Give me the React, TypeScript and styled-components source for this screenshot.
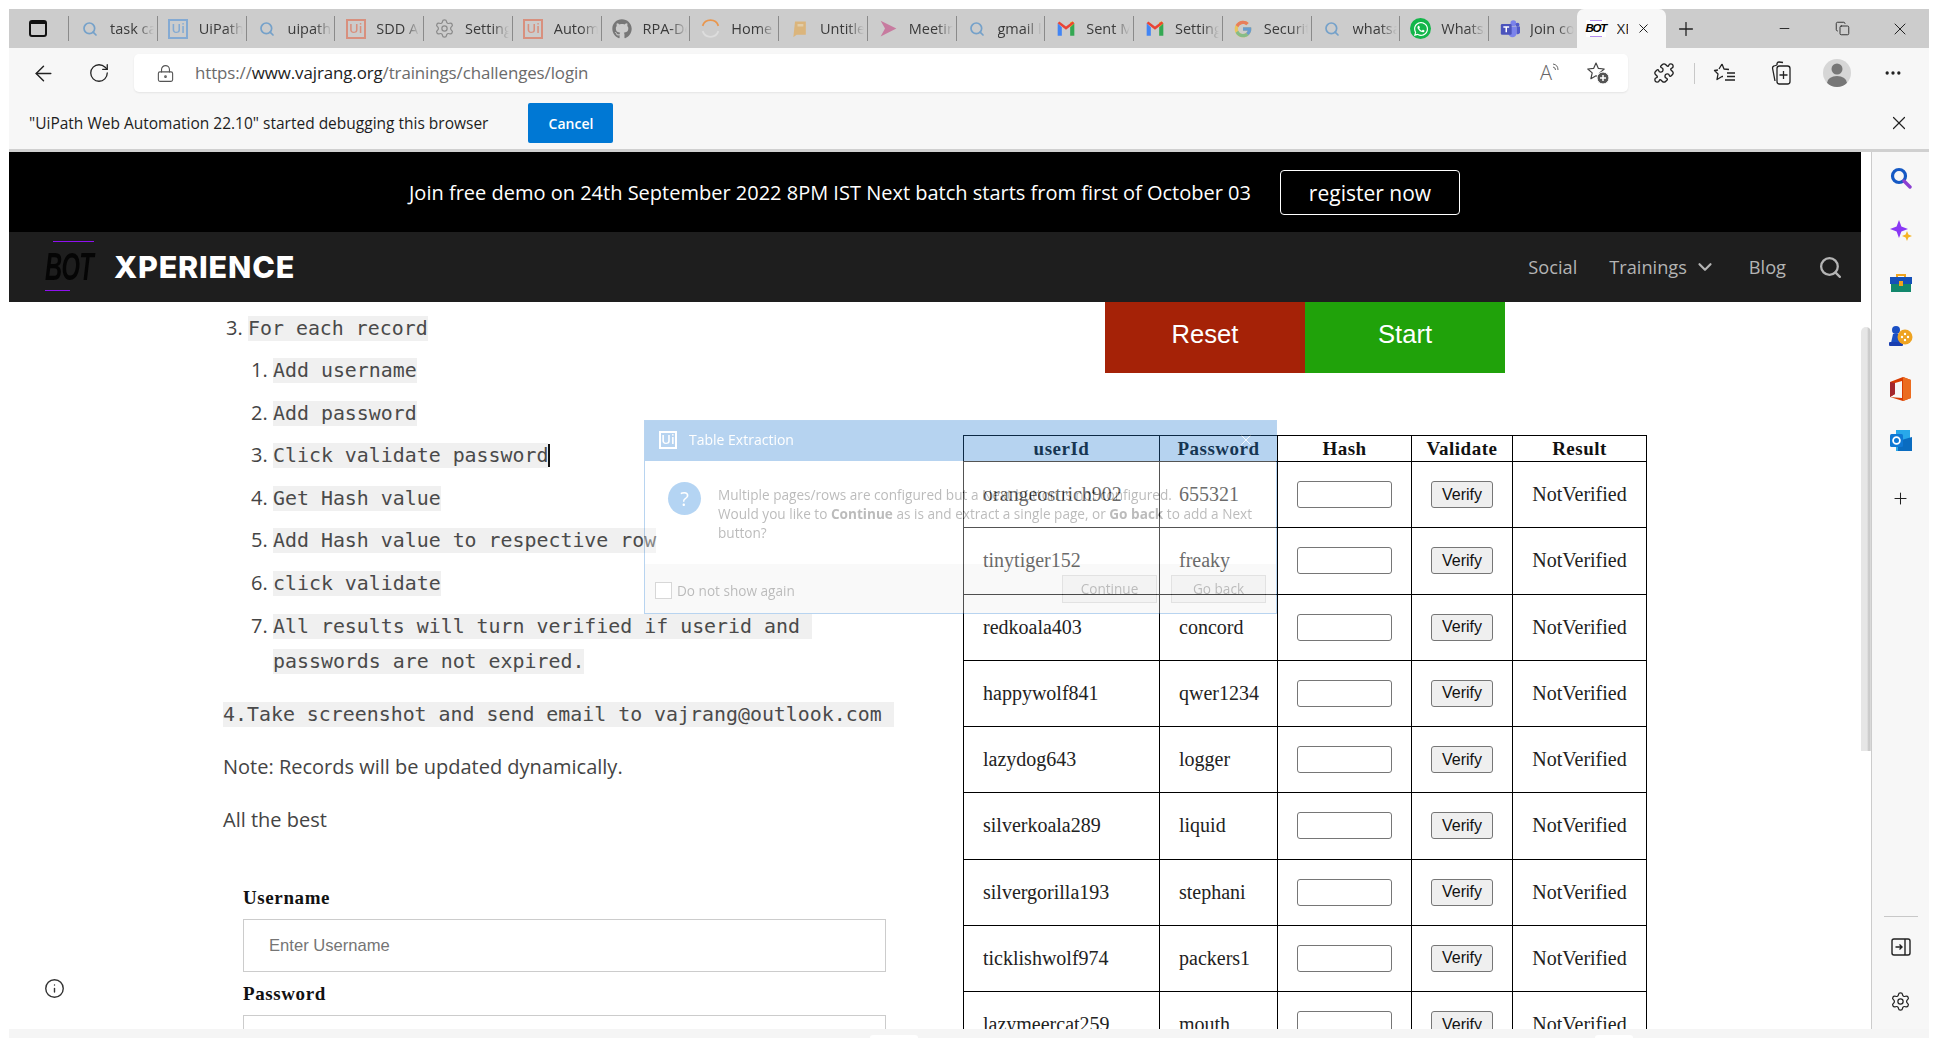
import * as React from "react";
import styled, {createGlobalStyle} from "styled-components";
import {
    ArrowLeft, ChevronDown, Copy, Info, LockKeyhole, Minus, MoreHorizontal,
    Plus, Puzzle, RotateCw, Search, Settings, X
} from "lucide-react";
import {FaGithub, FaWhatsapp} from "react-icons/fa";
import {FcGoogle} from "react-icons/fc";

const GlobalStyle = createGlobalStyle`
    html, body {
        margin: 0;
        padding: 0;
        background: white;
        overflow: hidden;
    }
`;

const Frame = styled.div`
    display: flex;
    flex-direction: column;
    box-sizing: border-box;
    width: 1938px;
    height: 1038px;
    padding: 9px 9px 0;
    overflow: hidden;
    font-family: "Open Sans", sans-serif;
`;

/* browser chrome */

const TabStrip = styled.div`
    display: flex;
    align-items: center;
    flex: none;
    height: 39px;
    background: #cccccc;
`;

const TabsButton = styled.div`
    display: flex;
    justify-content: center;
    flex: none;
    width: 59px;
    padding-right: 1px;
    box-sizing: border-box;
`;

const TabsGlyph = styled.div`
    box-sizing: border-box;
    width: 18px;
    height: 17px;
    border: 2px solid #111;
    border-top-width: 4px;
    border-radius: 3px;
`;

const TabSeparator = styled.div`
    flex: none;
    width: 1px;
    height: 25px;
    background: #8a8a8a;
`;

const Tab = styled.div`
    display: flex;
    align-items: center;
    flex: none;
    box-sizing: border-box;
    width: 87.75px;
    height: 100%;
    padding-left: 10px;
`;

const ActiveTab = styled(Tab)`
    width: 89px;
    margin-left: 0;
    padding-left: 9px;
    background: #f7f7f7;
    border-radius: 7px 7px 0 0;
`;

const TabIcon = styled.div<{$faded?: boolean}>`
    display: flex;
    align-items: center;
    justify-content: center;
    flex: none;
    width: 21px;
    height: 21px;
    opacity: ${({$faded}) => ($faded ? 0.55 : 1)};
`;

const TabTitle = styled.div`
    flex: none;
    width: 44px;
    margin-left: 10px;
    overflow: hidden;
    white-space: nowrap;
    font-size: 14.5px;
    color: #3a3a3a;
    -webkit-mask-image: linear-gradient(to right, black 62%, transparent 100%);
    mask-image: linear-gradient(to right, black 62%, transparent 100%);
`;

const ActiveTitle = styled.div`
    flex: none;
    width: 11px;
    margin-left: 11px;
    overflow: hidden;
    font-size: 14.5px;
    color: #222;
`;

const TabClose = styled.div`
    display: flex;
    margin-left: 8px;
`;

const NewTab = styled.div`
    display: flex;
    justify-content: center;
    flex: none;
    width: 40px;
`;

const WindowControls = styled.div`
    display: flex;
    align-items: center;
    margin-left: auto;
`;

const WindowButton = styled.div`
    display: flex;
    justify-content: center;
    width: 58px;
`;

const UiBadge = styled.div<{$color: string; $size?: number}>`
    display: flex;
    align-items: center;
    justify-content: center;
    box-sizing: border-box;
    width: ${({$size}) => $size || 20}px;
    height: ${({$size}) => $size || 20}px;
    border: 2px solid ${({$color}) => $color};
    color: ${({$color}) => $color};
    font-size: 13px;
    font-weight: 600;
    line-height: 1;
`;

const FaviconLogo = styled.div`
    display: flex;
    flex-direction: column;
    align-items: center;
    flex: none;
    width: 20px;
    font: italic 700 11.5px/15px "Liberation Sans", sans-serif;
    letter-spacing: -1.2px;
    color: #000;
    background: white;
    &::before, &::after {
        content: "";
        flex: none;
        width: 12px;
        height: 1px;
        background: #b48cf0;
    }
`;

const WhatsappDisc = styled.div`
    display: flex;
    align-items: center;
    justify-content: center;
    width: 21px;
    height: 21px;
    border-radius: 50%;
    background: #13b64a;
`;

const Toolbar = styled.div`
    display: flex;
    align-items: center;
    flex: none;
    box-sizing: border-box;
    gap: 12px;
    height: 52px;
    padding: 0 0 2px 12px;
    background: #f7f7f7;
`;

const ToolButton = styled.div`
    display: flex;
    align-items: center;
    justify-content: center;
    flex: none;
    width: 44px;
    height: 38px;
`;

const AddressBar = styled.div`
    display: flex;
    align-items: center;
    flex: none;
    box-sizing: border-box;
    width: 1494px;
    height: 38px;
    margin-left: 1px;
    margin-right: 2px;
    padding: 0 18px 0 22px;
    background: white;
    border-radius: 5px;
    box-shadow: 0 1px 2px rgba(0, 0, 0, 0.08);
`;

const Url = styled.div`
    margin-left: 20px;
    padding-bottom: 2px;
    font-size: 16.9px;
    color: #6b6b6b;
    letter-spacing: -0.1px;
    b {
        font-weight: 400;
        color: #222;
    }
`;

const AddressTools = styled.div`
    display: flex;
    align-items: center;
    gap: 25px;
    margin-left: auto;
`;

const ReadAloud = styled.div`
    display: flex;
    align-items: flex-start;
    font: 300 20px/22px "Open Sans", sans-serif;
    color: #666;
`;

const ToolDivider = styled.div`
    flex: none;
    width: 1px;
    height: 21px;
    margin: 0 -4px;
    background: #c8c8c8;
`;

const Avatar = styled.div`
    display: flex;
    align-items: center;
    justify-content: center;
    width: 28px;
    height: 28px;
    overflow: hidden;
    background: #d6d6d6;
    border-radius: 50%;
`;

const InfoBar = styled.div`
    display: flex;
    align-items: center;
    flex: none;
    box-sizing: border-box;
    height: 52px;
    padding: 0 19px 3px 20px;
    background: #f7f7f7;
    border-bottom: 3px solid #d0d0d0;
    font-size: 15.5px;
    color: #1d1d1d;
`;

const CancelButton = styled.div`
    display: flex;
    align-items: center;
    justify-content: center;
    width: 85px;
    height: 40px;
    margin-left: 40px;
    background: #0078d4;
    border-radius: 2px;
    color: white;
    font-size: 14px;
    font-weight: 600;
`;

const InfoClose = styled.div`
    display: flex;
    margin-left: auto;
`;

const BodyRow = styled.div`
    display: flex;
    flex: 1;
    min-height: 0;
`;

/* page */

const WebArea = styled.div`
    display: flex;
    flex-direction: column;
    flex: none;
    width: 1852px;
    overflow: hidden;
`;

const Announcement = styled.div`
    display: flex;
    align-items: center;
    flex: none;
    gap: 29px;
    height: 80px;
    padding-left: 400px;
    padding-top: 1px;
    box-sizing: border-box;
    background: #000;
    color: white;
    font-size: 20px;
    white-space: nowrap;
`;

const RegisterButton = styled.div`
    display: flex;
    align-items: center;
    justify-content: center;
    box-sizing: border-box;
    width: 180px;
    height: 45px;
    border: 1px solid white;
    border-radius: 4px;
    font-size: 21px;
`;

const NavBar = styled.div`
    display: flex;
    align-items: center;
    flex: none;
    height: 70px;
    padding: 0 18px 0 36px;
    box-sizing: border-box;
    background: #1e1e1e;
`;

const Logo = styled.div`
    display: flex;
    flex-direction: column;
    width: 50px;
    height: 52px;
    font: italic 700 33px/34px "Liberation Sans", sans-serif;
    color: #050505;
`;

const LogoLine = styled.div<{$width: number; $top?: boolean}>`
    width: ${({$width}) => $width}px;
    height: 1px;
    margin-left: ${({$top}) => ($top ? "8px" : "0")};
    background: #8f10f0;
`;

const LogoText = styled.div`
    height: 48px;
    padding-top: 4px;
    box-sizing: border-box;
    transform: scale(0.72, 1.2);
    transform-origin: left top;
    letter-spacing: -1px;
`;

const Brand = styled.div`
    margin-left: 19px;
    font: 800 30.5px/1 Inter, sans-serif;
    color: white;
    letter-spacing: 0.8px;
`;

const NavLinks = styled.div`
    display: flex;
    align-items: center;
    margin-left: auto;
    font-size: 18.2px;
    color: #b4b4b4;
`;

const NavLink = styled.div<{$gap: number}>`
    display: flex;
    align-items: center;
    gap: 7px;
    margin-right: ${({$gap}) => $gap}px;
`;

const Content = styled.div`
    position: relative;
    display: grid;
    grid-template-columns: 954px 1fr;
    flex: 1;
    min-height: 0;
    overflow: hidden;
    background: white;
`;

const LeftColumn = styled.div`
    box-sizing: border-box;
    padding: 8px 0 0 214px;
    font-size: 20px;
    line-height: 35px;
    color: #444;
`;

const StepList = styled.ol`
    margin: 0;
    padding: 0 0 0 25px;
`;

const SubList = styled.ol`
    margin: 7px 0 0;
    padding: 0 0 0 25px;
    li {
        margin-bottom: 7.6px;
    }
`;

const Code = styled.code`
    padding: 1px 0;
    background: #f0f0f0;
    font-family: "DejaVu Sans Mono", monospace;
    font-size: 19.9px;
    line-height: 1;
    color: #4a4a4a;
`;

const Caret = styled.span`
    border-right: 2px solid #111;
    margin-right: -2px;
`;

const CodeLine = styled.p`
    margin: 18.5px 0 0;
`;

const Paragraph = styled.p`
    margin: 18px 0 0;
`;

const Form = styled.form`
    width: 643px;
    margin: 50px 0 0 20px;
`;

const Label = styled.label`
    display: block;
    margin-bottom: 10px;
    font: 700 19px/22px "Liberation Serif", serif;
    color: #111;
    letter-spacing: 0.6px;
`;

const TextInput = styled.input`
    display: block;
    box-sizing: border-box;
    width: 100%;
    height: 53px;
    margin-bottom: 11px;
    padding: 0 25px;
    border: 1px solid #ccc;
    outline: none;
    font: 16.6px "Liberation Sans", sans-serif;
    &::placeholder {
        color: #757575;
    }
`;

const InfoFloat = styled.div`
    position: absolute;
    left: 35px;
    top: 676px;
    display: flex;
    color: #333;
`;

const RightColumn = styled.div`
    display: flex;
    flex-direction: column;
    min-width: 0;
`;

const ActionRow = styled.div`
    display: flex;
    flex: none;
    margin-left: 142px;
`;

const ActionButton = styled.div<{$color: string}>`
    display: flex;
    align-items: center;
    justify-content: center;
    box-sizing: border-box;
    width: 200px;
    height: 71px;
    padding-bottom: 7px;
    background: ${({$color}) => $color};
    color: white;
    font: 25.6px "Liberation Sans", sans-serif;
`;

const Table = styled.table`
    flex: none;
    width: 683px;
    margin-top: 62px;
    border-collapse: collapse;
    table-layout: fixed;
    font-family: "Liberation Serif", serif;
    color: #222;
`;

const HeadCell = styled.th<{$width: number}>`
    box-sizing: border-box;
    width: ${({$width}) => $width}px;
    height: 26px;
    padding: 1px 0 0;
    border: 1px solid #000;
    font-size: 19px;
    font-weight: 700;
    line-height: 24px;
    letter-spacing: 0.5px;
    color: #111;
`;

const Cell = styled.td<{$center?: boolean}>`
    height: 65.25px;
    padding: 0 0 0 ${({$center}) => ($center ? 0 : 19)}px;
    border: 1px solid #000;
    font-size: 20px;
    text-align: ${({$center}) => ($center ? "center" : "left")};
`;

const HashInput = styled.input`
    display: block;
    box-sizing: border-box;
    width: 95px;
    height: 27px;
    margin: 0 auto;
    border: 1px solid #767676;
    border-radius: 3px;
    background: white;
`;

const VerifyButton = styled.button`
    box-sizing: border-box;
    width: 62px;
    height: 27px;
    padding: 0;
    border: 1px solid #767676;
    border-radius: 3px;
    background: #efefef;
    font: 16px "Liberation Sans", sans-serif;
    color: #111;
`;

/* translucent dialog above the page */

const Dialog = styled.div`
    position: absolute;
    left: 635px;
    top: 118px;
    display: flex;
    flex-direction: column;
    box-sizing: border-box;
    width: 633px;
    height: 194px;
    border: 1px solid #2b80d4;
    background: white;
    opacity: 0.33;
    color: #333;
    font-size: 13.6px;
`;

const DialogHeader = styled.div`
    display: flex;
    align-items: center;
    flex: none;
    box-sizing: border-box;
    gap: 12px;
    height: 40px;
    padding: 0 14px 3px;
    background: #257dd2;
    color: white;
    font-size: 14px;
`;

const DialogClose = styled.div`
    display: flex;
    margin-left: auto;
    margin-right: 7px;
`;

const DialogBody = styled.div`
    display: flex;
    flex: 1;
    gap: 17px;
    padding: 24px 0 0 23px;
    line-height: 19px;
    white-space: nowrap;
`;

const HelpCircle = styled.div`
    display: flex;
    align-items: center;
    justify-content: center;
    flex: none;
    width: 33px;
    height: 33px;
    margin-top: -3px;
    border-radius: 50%;
    background: #1f80dc;
    color: white;
    font-size: 20px;
`;

const DialogFooter = styled.div`
    display: flex;
    align-items: center;
    flex: none;
    box-sizing: border-box;
    height: 49px;
    padding: 4px 10px 0;
    background: #efefef;
`;

const Checkbox = styled.div`
    box-sizing: border-box;
    width: 17px;
    height: 17px;
    margin-right: 5px;
    border: 1px solid #888;
    background: white;
`;

const DialogButton = styled.div<{$first?: boolean}>`
    display: flex;
    align-items: center;
    justify-content: center;
    box-sizing: border-box;
    width: 95px;
    height: 28px;
    margin-bottom: 4px;
    margin-left: ${({$first}) => ($first ? "auto" : "14px")};
    border: 1px solid #aaa;
    background: #ddd;
`;

/* scrollbar and sidebar */

const ScrollBar = styled.div`
    flex: none;
    box-sizing: border-box;
    width: 11px;
    border-right: 1px solid #ccc;
    background: white;
`;

const ScrollThumb = styled.div`
    width: 100%;
    height: 424px;
    margin-top: 175px;
    background: linear-gradient(to right, #e6e6e6 60%, #c4c4c4 80%, #e0e0e0);
    border-radius: 5px 5px 0 0;
`;

const SidePanel = styled.div`
    display: flex;
    flex-direction: column;
    flex: none;
    width: 57px;
    background: #f7f7f7;
`;

const SideSlot = styled.div<{$height?: number}>`
    display: flex;
    align-items: center;
    justify-content: center;
    flex: none;
    height: ${({$height}) => $height || 52.6}px;
`;

const SideAddSlot = styled(SideSlot)`
    margin-top: 5px;
`;

const SideFoot = styled.div`
    display: flex;
    flex-direction: column;
    margin-top: auto;
    padding-bottom: 1px;
`;

const SideRule = styled.div`
    width: 34px;
    height: 1px;
    margin: 0 auto 3px 12px;
    background: #c8c8c8;
`;

const BottomBar = styled.div`
    display: flex;
    flex: none;
    height: 9px;
    background: #f5f5f5;
`;

const BottomTab = styled.div<{$left: number; $width: number}>`
    width: ${({$width}) => $width}px;
    height: 3px;
    margin: 6px 0 0 ${({$left}) => $left}px;
    background: white;
    border-radius: 3px 3px 0 0;
`;

const SearchFavicon: React.FC = () => <Search size={16} color="#2f7fc8" strokeWidth={2.6} />;

const GmailIcon: React.FC = () => (
    <svg width="20" height="20" viewBox="0 0 24 24">
        <path fill="#4285F4" d="M2 5v15h5V10z" />
        <path fill="#34A853" d="M17 10v10h5V5z" />
        <path fill="#FBBC04" d="M22 5l-5 5V4l3-1z" />
        <path fill="#EA4335" d="M2 5l10 8 10-8-2-2-8 6-8-6z" />
    </svg>
);

const HomeRing: React.FC = () => (
    <svg width="21" height="21" viewBox="0 0 24 24" fill="none" stroke="#e9964d" strokeWidth="2">
        <path d="M3 9a9.5 9.5 0 0 1 18 0" />
        <path d="M3 15a9.5 9.5 0 0 0 18 0" stroke="#ddd" />
    </svg>
);

const NotebookIcon: React.FC = () => (
    <svg width="20" height="20" viewBox="0 0 24 24">
        <path fill="#e8a33c" d="M6 3h13v16H8l-4 3 2-19z" />
        <path fill="#f5cf8d" d="M9 6h7v3H9z" />
    </svg>
);

const MeetingIcon: React.FC = () => (
    <svg width="21" height="21" viewBox="0 0 24 24">
        <path fill="#c43a7c" d="M3 3l18 9-18 9 5-9z" />
    </svg>
);

const TeamsIcon: React.FC = () => (
    <svg width="20" height="20" viewBox="0 0 24 24">
        <circle cx="16" cy="5" r="3.4" fill="#7b83eb" />
        <circle cx="21" cy="7" r="2.4" fill="#5059c9" />
        <path fill="#7b83eb" d="M10 9h10v8a5 5 0 0 1-10 0z" />
        <path fill="#5059c9" d="M20 9h4v7a3 3 0 0 1-4 2z" />
        <rect x="1" y="6" width="13" height="13" rx="1.5" fill="#4b53bc" />
        <path stroke="white" strokeWidth="1.8" d="M4 9.5h7M7.5 9.5V16" />
    </svg>
);

const STAR = "M10 2l2.4 5.4 5.8.6-4.4 3.9 1.3 5.8L10 14.8l-5.1 2.9 1.3-5.8L1.8 8l5.8-.6z";

const AddFavoriteIcon: React.FC = () => (
    <svg width="24" height="24" viewBox="0 0 24 24" fill="none">
        <path d={STAR} stroke="#444" strokeWidth="1.2" strokeLinejoin="round" />
        <circle cx="17" cy="17" r="6" fill="#555" stroke="white" />
        <path d="M14 17h6M17 14v6" stroke="white" strokeWidth="1.5" />
    </svg>
);

const FavoritesIcon: React.FC = () => (
    <svg width="24" height="22" viewBox="0 0 24 22" fill="none" stroke="#222" strokeWidth="1.3">
        <path d="M9 2l2 5 5 .5M5 8l-3.5.5 3.5 3.5-1 5.5 5-3h1M6 7l3-5" strokeLinejoin="round" />
        <path d="M14 11h8M14 14.5h8M12 18h10" />
    </svg>
);

const CollectionsIcon: React.FC = () => (
    <svg width="24" height="26" viewBox="0 0 24 26" fill="none" stroke="#222" strokeWidth="1.3">
        <path d="M8 5V3.5A2 2 0 0 1 10 2l4 .5M6 21L3.5 8A2 2 0 0 1 5 6l3-1" />
        <rect x="8" y="6" width="13" height="18" rx="2.5" />
        <path d="M14.5 11v8M10.5 15h8" />
    </svg>
);

const DockIcon: React.FC = () => (
    <svg width="22" height="22" viewBox="0 0 22 22" fill="none" stroke="#222" strokeWidth="1.4">
        <rect x="2" y="3" width="18" height="16" rx="2" />
        <path d="M15 3v16" />
        <path d="M5.5 11H12M9.5 8.5L12 11l-2.5 2.5" />
    </svg>
);

const SideSearch: React.FC = () => (
    <svg width="22" height="22" viewBox="0 0 22 22" fill="none">
        <circle cx="9" cy="9" r="6.5" stroke="#1559c4" strokeWidth="3.2" />
        <path d="M14 14l6 6" stroke="#8b3fd1" strokeWidth="3.4" strokeLinecap="round" />
    </svg>
);

const SideSparkle: React.FC = () => (
    <svg width="24" height="22" viewBox="0 0 24 22">
        <path fill="#8a38f5" d="M10 0l2.4 6.6L19 9l-6.6 2.4L10 18l-2.4-6.6L1 9l6.6-2.4z" />
        <path fill="#f5b324" d="M18 11l1.4 3.6L23 16l-3.6 1.4L18 21l-1.4-3.6L13 16l3.6-1.4z" />
    </svg>
);

const SideToolbox: React.FC = () => (
    <svg width="22" height="20" viewBox="0 0 22 20">
        <path fill="none" stroke="#f0a41e" strokeWidth="2" d="M7 6V2h8v4" />
        <rect y="4" width="22" height="7" fill="#1550b8" />
        <rect x="1" y="11" width="20" height="8" fill="#12876c" />
        <rect x="9" y="8" width="4" height="5" fill="#f0a41e" />
    </svg>
);

const SideGames: React.FC = () => (
    <svg width="24" height="22" viewBox="0 0 24 22">
        <circle cx="7" cy="5" r="4" fill="#1a4fc4" />
        <path fill="#1a4fc4" d="M4 9h6l2 9H2z" />
        <rect y="17" width="14" height="4" rx="1" fill="#1a3fb0" />
        <circle cx="16" cy="12" r="7.5" fill="#eea321" />
        <circle cx="16" cy="9" r="1.2" fill="white" />
        <circle cx="13" cy="12" r="1.2" fill="white" />
        <circle cx="19" cy="12" r="1.2" fill="white" />
        <circle cx="16" cy="15" r="1.2" fill="white" />
    </svg>
);

const SideOffice: React.FC = () => (
    <svg width="21" height="24" viewBox="0 0 21 24">
        <path fill="#d83b01" d="M13 0l8 3v18l-8 3-13-4 12 1V4L5 6v11l-5 3V5z" />
        <path fill="#a4262c" d="M0 5l5 1v11l-5 3z" />
        <path fill="#eb6c1f" d="M13 0l8 3v18l-8 3z" />
    </svg>
);

const SideOutlook: React.FC = () => (
    <svg width="22" height="22" viewBox="0 0 22 22">
        <rect x="6" width="14" height="21" fill="#28a8ea" />
        <path fill="#0a6cc0" d="M8 11l14-4v14H8z" />
        <rect y="4" width="13" height="13" rx="1.5" fill="#0f78d4" />
        <circle cx="6.5" cy="10.5" r="3.4" fill="none" stroke="white" strokeWidth="1.8" />
    </svg>
);

const favIcons: {[key: string]: JSX.Element} = {
    search: <SearchFavicon />,
    uiBlue: <UiBadge $color="#4a90d9">Ui</UiBadge>,
    uiOrange: <UiBadge $color="#e2603f">Ui</UiBadge>,
    gear: <Settings size={21} color="#555" strokeWidth={1.4} />,
    github: <FaGithub size={20} color="#333" />,
    home: <HomeRing />,
    notebook: <NotebookIcon />,
    meeting: <MeetingIcon />,
    gmail: <GmailIcon />,
    google: <FcGoogle size={20} />,
    whatsapp: <WhatsappDisc><FaWhatsapp size={16} color="white" /></WhatsappDisc>,
    teams: <TeamsIcon />
};

const tabs = [
    {icon: "search", title: "task card", faded: true},
    {icon: "uiBlue", title: "UiPath St", faded: true},
    {icon: "search", title: "uipath st", faded: true},
    {icon: "uiOrange", title: "SDD Aut", faded: true},
    {icon: "gear", title: "Settings", faded: true},
    {icon: "uiOrange", title: "Automat", faded: true},
    {icon: "github", title: "RPA-Dev", faded: true},
    {icon: "home", title: "Home", faded: false},
    {icon: "notebook", title: "Untitled", faded: true},
    {icon: "meeting", title: "Meeting", faded: true},
    {icon: "search", title: "gmail lo", faded: true},
    {icon: "gmail", title: "Sent Mail", faded: false},
    {icon: "gmail", title: "Settings", faded: false},
    {icon: "google", title: "Security", faded: true},
    {icon: "search", title: "whatsapp", faded: true},
    {icon: "whatsapp", title: "WhatsApp", faded: false},
    {icon: "teams", title: "Join conv", faded: false}
];

const records = [
    ["orangeostrich902", "655321"],
    ["tinytiger152", "freaky"],
    ["redkoala403", "concord"],
    ["happywolf841", "qwer1234"],
    ["lazydog643", "logger"],
    ["silverkoala289", "liquid"],
    ["silvergorilla193", "stephani"],
    ["ticklishwolf974", "packers1"],
    ["lazymeercat259", "mouth"]
];

const App: React.FC = (): JSX.Element => {
    return (
        <Frame>
            <GlobalStyle />
            <TabStrip>
                <TabsButton><TabsGlyph /></TabsButton>
                {tabs.map((tab, i) => (
                    <React.Fragment key={i}>
                        <TabSeparator />
                        <Tab>
                            <TabIcon $faded={tab.faded}>{favIcons[tab.icon]}</TabIcon>
                            <TabTitle>{tab.title}</TabTitle>
                        </Tab>
                    </React.Fragment>
                ))}
                <ActiveTab>
                    <FaviconLogo>BOT</FaviconLogo>
                    <ActiveTitle>XPERIENCE</ActiveTitle>
                    <TabClose><X size={15} color="#111" strokeWidth={1.5} /></TabClose>
                </ActiveTab>
                <NewTab><Plus size={22} color="#222" strokeWidth={1.4} /></NewTab>
                <WindowControls>
                    <WindowButton><Minus size={15} color="#222" strokeWidth={1.5} /></WindowButton>
                    <WindowButton><Copy size={15} color="#222" strokeWidth={1.4} /></WindowButton>
                    <WindowButton><X size={20} color="#222" strokeWidth={1.2} /></WindowButton>
                </WindowControls>
            </TabStrip>
            <Toolbar>
                <ToolButton><ArrowLeft size={25} color="#222" strokeWidth={1.4} /></ToolButton>
                <ToolButton><RotateCw size={22} color="#222" strokeWidth={1.4} /></ToolButton>
                <AddressBar>
                    <LockKeyhole size={19} color="#555" strokeWidth={1.4} />
                    <Url>https://<b>www.vajrang.org</b>/trainings/challenges/login</Url>
                    <AddressTools>
                        <ReadAloud>A<svg width="9" height="12" viewBox="0 0 9 12" fill="none" stroke="#666"><path d="M1 2a6 6 0 0 1 5 6M1 5a3 3 0 0 1 2.5 3" /></svg></ReadAloud>
                        <AddFavoriteIcon />
                    </AddressTools>
                </AddressBar>
                <ToolButton><Puzzle size={22} color="#222" strokeWidth={1.5} /></ToolButton>
                <ToolDivider />
                <ToolButton><FavoritesIcon /></ToolButton>
                <ToolButton><CollectionsIcon /></ToolButton>
                <ToolButton>
                    <Avatar>
                        <svg width="28" height="28" viewBox="0 0 28 28">
                            <circle cx="14" cy="10" r="5.5" fill="#777" />
                            <ellipse cx="14" cy="24" rx="10" ry="7" fill="#777" />
                        </svg>
                    </Avatar>
                </ToolButton>
                <ToolButton><MoreHorizontal size={20} color="#222" /></ToolButton>
            </Toolbar>
            <InfoBar>
                "UiPath Web Automation 22.10" started debugging this browser
                <CancelButton>Cancel</CancelButton>
                <InfoClose><X size={22} color="#222" strokeWidth={1.3} /></InfoClose>
            </InfoBar>
            <BodyRow>
                <WebArea>
                    <Announcement>
                        Join free demo on 24th September 2022 8PM IST Next batch starts from first of October 03
                        <RegisterButton>register now</RegisterButton>
                    </Announcement>
                    <NavBar>
                        <Logo>
                            <LogoLine $width={41} $top />
                            <LogoText>BOT</LogoText>
                            <LogoLine $width={25} />
                        </Logo>
                        <Brand>XPERIENCE</Brand>
                        <NavLinks>
                            <NavLink $gap={32}>Social</NavLink>
                            <NavLink $gap={33}>Trainings <ChevronDown size={22} strokeWidth={2.4} /></NavLink>
                            <NavLink $gap={32}>Blog</NavLink>
                            <Search size={25} strokeWidth={2.2} />
                        </NavLinks>
                    </NavBar>
                    <Content>
                        <LeftColumn>
                            <StepList start={3}>
                                <li>
                                    <Code>For each record</Code>
                                    <SubList>
                                        <li><Code>Add username</Code></li>
                                        <li><Code>Add password</Code></li>
                                        <li><Code><Caret>Click validate password</Caret></Code></li>
                                        <li><Code>Get Hash value</Code></li>
                                        <li><Code>Add Hash value to respective row</Code></li>
                                        <li><Code>click validate</Code></li>
                                        <li>
                                            <Code>All results will turn verified if userid and{"\u00a0"}</Code>
                                            <br />
                                            <Code>passwords are not expired.</Code>
                                        </li>
                                    </SubList>
                                </li>
                            </StepList>
                            <CodeLine><Code>4.Take screenshot and send email to vajrang@outlook.com{"\u00a0"}</Code></CodeLine>
                            <Paragraph>Note: Records will be updated dynamically.</Paragraph>
                            <Paragraph>All the best</Paragraph>
                            <Form>
                                <Label>Username</Label>
                                <TextInput placeholder="Enter Username" />
                                <Label>Password</Label>
                                <TextInput />
                            </Form>
                        </LeftColumn>
                        <RightColumn>
                            <ActionRow>
                                <ActionButton $color="#a52207">Reset</ActionButton>
                                <ActionButton $color="#20a20a">Start</ActionButton>
                            </ActionRow>
                            <Table>
                                <thead>
                                    <tr>
                                        <HeadCell $width={196}>userId</HeadCell>
                                        <HeadCell $width={118}>Password</HeadCell>
                                        <HeadCell $width={134}>Hash</HeadCell>
                                        <HeadCell $width={101}>Validate</HeadCell>
                                        <HeadCell $width={134}>Result</HeadCell>
                                    </tr>
                                </thead>
                                <tbody>
                                    {records.map(([userId, password]) => (
                                        <tr key={userId}>
                                            <Cell>{userId}</Cell>
                                            <Cell>{password}</Cell>
                                            <Cell $center><HashInput /></Cell>
                                            <Cell $center><VerifyButton type="button">Verify</VerifyButton></Cell>
                                            <Cell $center>NotVerified</Cell>
                                        </tr>
                                    ))}
                                </tbody>
                            </Table>
                        </RightColumn>
                        <InfoFloat><Info size={21} strokeWidth={1.6} /></InfoFloat>
                        <Dialog>
                            <DialogHeader>
                                <UiBadge $color="white" $size={18}>Ui</UiBadge>
                                Table Extraction
                                <DialogClose><X size={18} strokeWidth={1.2} /></DialogClose>
                            </DialogHeader>
                            <DialogBody>
                                <HelpCircle>?</HelpCircle>
                                <div>
                                    Multiple pages/rows are configured but a Next button is not configured.<br />
                                    Would you like to <b>Continue</b> as is and extract a single page, or <b>Go back</b> to add a Next<br />
                                    button?
                                </div>
                            </DialogBody>
                            <DialogFooter>
                                <Checkbox />
                                Do not show again
                                <DialogButton $first>Continue</DialogButton>
                                <DialogButton>Go back</DialogButton>
                            </DialogFooter>
                        </Dialog>
                    </Content>
                </WebArea>
                <ScrollBar><ScrollThumb /></ScrollBar>
                <SidePanel>
                    <SideSlot><SideSearch /></SideSlot>
                    <SideSlot><SideSparkle /></SideSlot>
                    <SideSlot><SideToolbox /></SideSlot>
                    <SideSlot><SideGames /></SideSlot>
                    <SideSlot><SideOffice /></SideSlot>
                    <SideSlot><SideOutlook /></SideSlot>
                    <SideAddSlot><Plus size={19} color="#222" strokeWidth={1.3} /></SideAddSlot>
                    <SideFoot>
                        <SideRule />
                        <SideSlot $height={54}><DockIcon /></SideSlot>
                        <SideSlot $height={54}><Settings size={21} color="#222" strokeWidth={1.4} /></SideSlot>
                    </SideFoot>
                </SidePanel>
            </BodyRow>
            <BottomBar>
                <BottomTab $left={861} $width={48} />
                <BottomTab $left={677} $width={38} />
            </BottomBar>
        </Frame>
    );
}

export default App;
